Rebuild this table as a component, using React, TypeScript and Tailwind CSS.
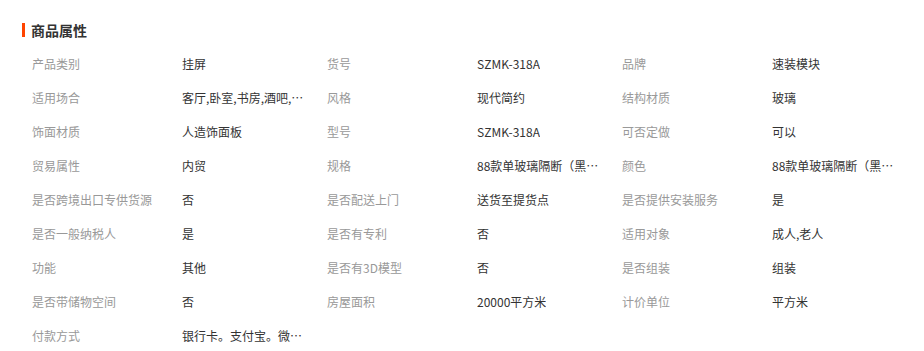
const attrs: [string, string][] = [
  ['产品类别', '挂屏'],
  ['货号', 'SZMK-318A'],
  ['品牌', '速装模块'],
  ['适用场合', '客厅,卧室,书房,酒吧,餐厅,玄关'],
  ['风格', '现代简约'],
  ['结构材质', '玻璃'],
  ['饰面材质', '人造饰面板'],
  ['型号', 'SZMK-318A'],
  ['可否定做', '可以'],
  ['贸易属性', '内贸'],
  ['规格', '88款单玻璃隔断（黑色边框）'],
  ['颜色', '88款单玻璃隔断（黑色边框）'],
  ['是否跨境出口专供货源', '否'],
  ['是否配送上门', '送货至提货点'],
  ['是否提供安装服务', '是'],
  ['是否一般纳税人', '是'],
  ['是否有专利', '否'],
  ['适用对象', '成人,老人'],
  ['功能', '其他'],
  ['是否有3D模型', '否'],
  ['是否组装', '组装'],
  ['是否带储物空间', '否'],
  ['房屋面积', '20000平方米'],
  ['计价单位', '平方米'],
  ['付款方式', '银行卡。支付宝。微信。现金'],
];

export default function App() {
  return (
    <div className="w-[924px] h-[351px] bg-white pl-[22px] pt-[20px] overflow-hidden font-['Noto_Sans_CJK_SC','Microsoft_YaHei',sans-serif]">
      {/* Title */}
      <div className="flex items-center h-[20px] mb-[7px]">
        <span className="w-[3px] h-[14px] bg-[#ff4400]" />
        <h3 className="ml-[6px] text-[14px] font-bold text-[#333] leading-[20px]">商品属性</h3>
      </div>

      {/* Attribute grid */}
      <div className="grid grid-cols-[295px_295px_295px] pl-[10px]">
        {attrs.map(([label, value]) => (
          <div key={label} className="flex items-center h-[34px] text-[12px]">
            <span className="w-[150px] shrink-0 text-[#999] whitespace-nowrap">{label}</span>
            <span className="max-w-[122px] text-[#333] truncate">{value}</span>
          </div>
        ))}
      </div>
    </div>
  );
}
